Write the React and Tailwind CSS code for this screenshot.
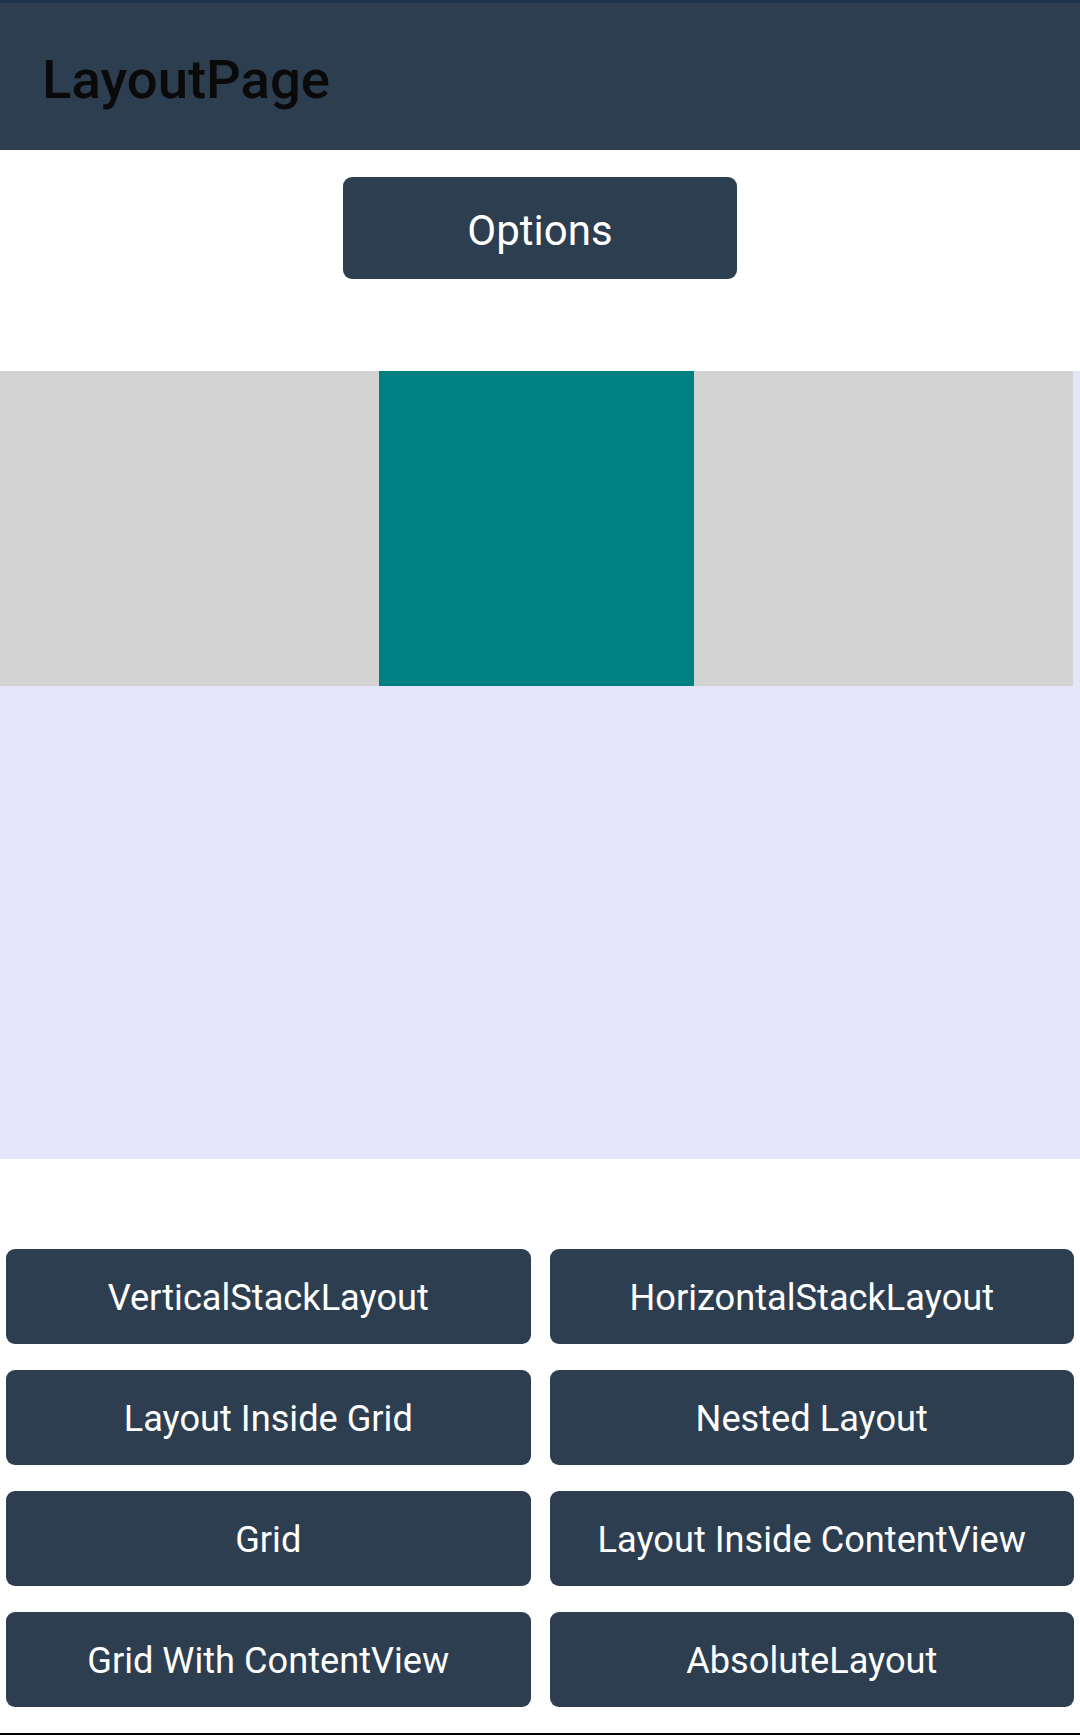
import React from "react";

const buttons = [
  "VerticalStackLayout",
  "HorizontalStackLayout",
  "Layout Inside Grid",
  "Nested Layout",
  "Grid",
  "Layout Inside ContentView",
  "Grid With ContentView",
  "AbsoluteLayout",
];

export default function App() {
  return (
    <div
      className="w-[1080px] h-[1735px] bg-white flex flex-col overflow-hidden"
      style={{ fontFamily: "Roboto, 'Noto Sans', sans-serif" }}
    >
      <div className="h-[3px] bg-[#1e3350]" />
      <header className="h-[147px] bg-[#2d3e50] flex items-center pl-[42px] pt-[5px]">
        <h1 className="text-[54.5px] font-medium text-[#0a0a0a] leading-none">LayoutPage</h1>
      </header>

      <div className="flex justify-center pt-[27px]">
        <button className="w-[394px] h-[102px] rounded-[9px] bg-[#2d3e50] text-white text-[42px] leading-none pt-[5px]">
          Options
        </button>
      </div>

      <div className="mt-[92px] h-[788px] bg-[#e6e6fa]">
        <div className="w-[1073px] h-[315px] bg-[#d3d3d3] flex">
          <div className="w-[379px]" />
          <div className="w-[315px] h-[315px] bg-[#008080]" />
        </div>
      </div>

      <div className="mt-[90px] px-[6px] grid grid-cols-2 gap-x-[19px] gap-y-[26px]">
        {buttons.map((b) => (
          <button
            key={b}
            className="h-[95px] rounded-[9px] bg-[#2d3e50] text-white text-[36.2px] leading-none flex items-center justify-center pt-[3px]"
          >
            {b}
          </button>
        ))}
      </div>

      <div className="flex-1" />
      <div className="h-[2px] bg-black" />
    </div>
  );
}
